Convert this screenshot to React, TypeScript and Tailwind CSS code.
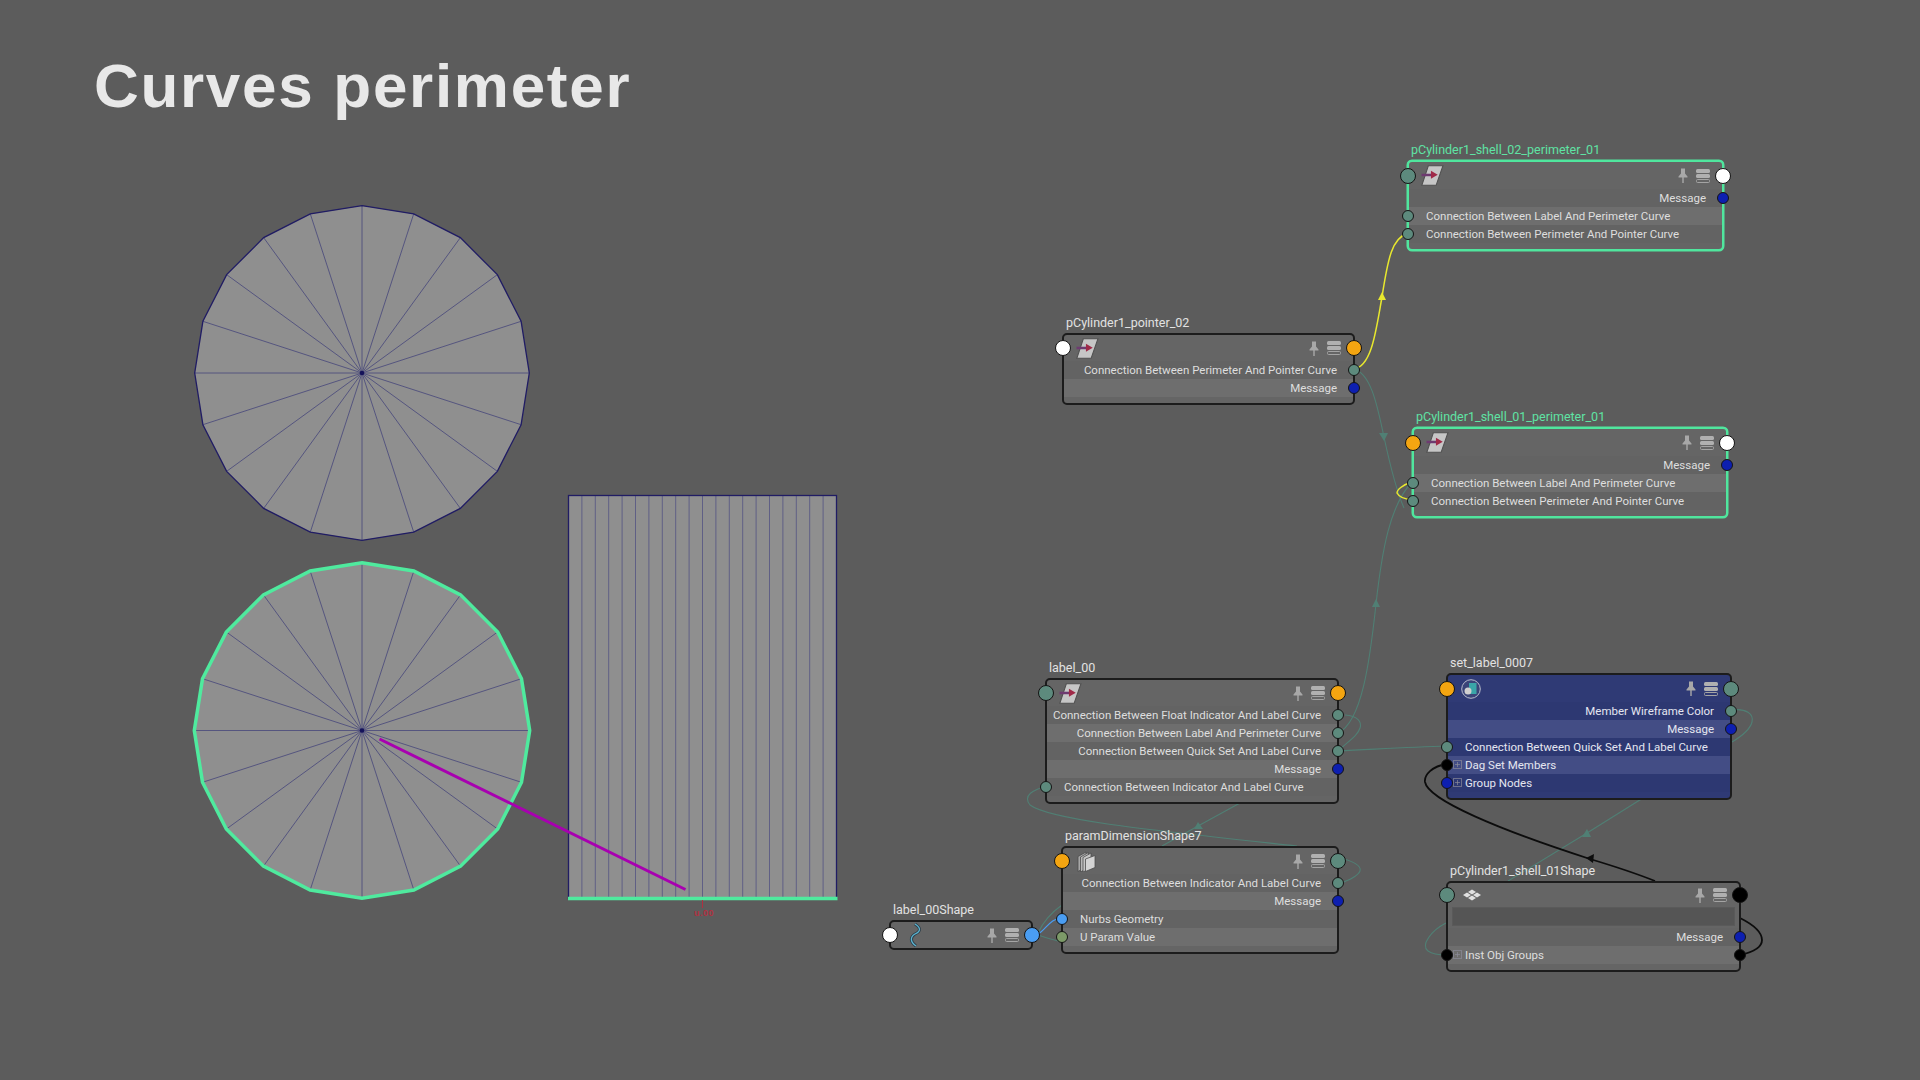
import React from "react";

const UI_FONT = "font-['Roboto',sans-serif]";

type PortColor = "white" | "orange" | "teal" | "blue" | "black" | "navy" | "olive";
type Align = "left" | "right";

type Row = {
  text: string;
  align: Align;
  left?: PortColor;
  right?: PortColor;
  plus?: boolean;
};

type IconKind = "curve" | "sheets" | "set" | "diamond" | "wave";

type NodeData = {
  name: string;
  pos: string;
  icon: IconKind;
  inPort: PortColor;
  outPort: PortColor;
  rows: Row[];
  selected?: boolean;
  blue?: boolean;
  field?: boolean;
  tall?: boolean;
};

const portColors: Record<PortColor, string> = {
  white: "bg-white",
  orange: "bg-[#f4a511]",
  teal: "bg-[#5d8a7d]",
  blue: "bg-[#4a9df2]",
  black: "bg-black",
  navy: "bg-[#0d1fb0]",
  olive: "bg-[#7c9a68]",
};

const iconOffset: Record<IconKind, string> = {
  curve: "ml-[12px]",
  sheets: "ml-[14px]",
  set: "ml-[13px]",
  diamond: "ml-[14px]",
  wave: "ml-[17px]",
};

const nodes: NodeData[] = [
  {
    name: "pCylinder1_shell_02_perimeter_01",
    pos: "left-[1407px] top-[160px] w-[317px]",
    icon: "curve",
    inPort: "teal",
    outPort: "white",
    selected: true,
    tall: true,
    rows: [
      { text: "Message", align: "right", right: "navy" },
      { text: "Connection Between Label And Perimeter Curve", align: "left", left: "teal" },
      { text: "Connection Between Perimeter And Pointer Curve", align: "left", left: "teal" },
    ],
  },
  {
    name: "pCylinder1_shell_01_perimeter_01",
    pos: "left-[1412px] top-[427px] w-[316px]",
    icon: "curve",
    inPort: "orange",
    outPort: "white",
    selected: true,
    tall: true,
    rows: [
      { text: "Message", align: "right", right: "navy" },
      { text: "Connection Between Label And Perimeter Curve", align: "left", left: "teal" },
      { text: "Connection Between Perimeter And Pointer Curve", align: "left", left: "teal" },
    ],
  },
  {
    name: "pCylinder1_pointer_02",
    pos: "left-[1062px] top-[333px] w-[293px]",
    icon: "curve",
    inPort: "white",
    outPort: "orange",
    rows: [
      { text: "Connection Between Perimeter And Pointer Curve", align: "right", right: "teal" },
      { text: "Message", align: "right", right: "navy" },
    ],
  },
  {
    name: "label_00",
    pos: "left-[1045px] top-[678px] w-[294px]",
    icon: "curve",
    inPort: "teal",
    outPort: "orange",
    rows: [
      { text: "Connection Between Float Indicator And Label Curve", align: "right", right: "teal" },
      { text: "Connection Between Label And Perimeter Curve", align: "right", right: "teal" },
      { text: "Connection Between Quick Set And Label Curve", align: "right", right: "teal" },
      { text: "Message", align: "right", right: "navy" },
      { text: "Connection Between Indicator And Label Curve", align: "left", left: "teal" },
    ],
  },
  {
    name: "paramDimensionShape7",
    pos: "left-[1061px] top-[846px] w-[278px]",
    icon: "sheets",
    inPort: "orange",
    outPort: "teal",
    rows: [
      { text: "Connection Between Indicator And Label Curve", align: "right", right: "teal" },
      { text: "Message", align: "right", right: "navy" },
      { text: "Nurbs Geometry", align: "left", left: "blue" },
      { text: "U Param Value", align: "left", left: "olive" },
    ],
  },
  {
    name: "set_label_0007",
    pos: "left-[1446px] top-[673px] w-[286px]",
    icon: "set",
    inPort: "orange",
    outPort: "teal",
    blue: true,
    tall: true,
    rows: [
      { text: "Member Wireframe Color", align: "right", right: "teal" },
      { text: "Message", align: "right", right: "navy" },
      { text: "Connection Between Quick Set And Label Curve", align: "left", left: "teal" },
      { text: "Dag Set Members", align: "left", left: "black", plus: true },
      { text: "Group Nodes", align: "left", left: "navy", plus: true },
    ],
  },
  {
    name: "pCylinder1_shell_01Shape",
    pos: "left-[1446px] top-[881px] w-[295px]",
    icon: "diamond",
    inPort: "teal",
    outPort: "black",
    field: true,
    rows: [
      { text: "Message", align: "right", right: "navy" },
      { text: "Inst Obj Groups", align: "left", left: "black", right: "black", plus: true },
    ],
  },
  {
    name: "label_00Shape",
    pos: "left-[889px] top-[920px] w-[144px]",
    icon: "wave",
    inPort: "white",
    outPort: "blue",
    rows: [],
  },
];

const NodeIcon = ({ kind }: { kind: IconKind }) => {
  if (kind === "curve") {
    return (
      <svg width="23" height="21" viewBox="0 0 22 20" className="block">
        <path d="M7 0.700h14l-6.500 18.600H0.800z" fill="#c6c6c6" stroke="#505050" strokeWidth="1" />
        <path d="M0.500 9.500h11" stroke="#6e3a70" strokeWidth="2.400" />
        <path d="M9.500 5.500l6.500 3.800-6.500 3.800z" fill="#a02a48" />
      </svg>
    );
  }
  if (kind === "sheets") {
    return (
      <svg width="19" height="21" viewBox="0 0 19 21" className="block">
        <path d="M1 5.500l8-4.500v15l-8 4.500z" fill="#a8a8a8" stroke="#4c4c4c" strokeWidth="0.800" />
        <path d="M3.500 6l8-4.500v15l-8 4.500z" fill="#b8b8b8" stroke="#4c4c4c" strokeWidth="0.800" />
        <path d="M6 6.500l8-4.500v15l-8 4z" fill="#c6c6c6" stroke="#4c4c4c" strokeWidth="0.800" />
        <path d="M8.500 8l9.500-3.500v12l-9.500 4z" fill="#d4d4d4" stroke="#4c4c4c" strokeWidth="0.800" />
      </svg>
    );
  }
  if (kind === "set") {
    return (
      <svg width="20" height="20" viewBox="0 0 20 20" className="block">
        <circle cx="10" cy="10" r="9.300" fill="#3a4478" stroke="#b8bccc" strokeWidth="1" />
        <rect x="8" y="4" width="7.500" height="11" fill="#3aa5a8" />
        <circle cx="7" cy="12" r="3.500" fill="#d0d0d0" />
      </svg>
    );
  }
  if (kind === "diamond") {
    return (
      <svg width="20" height="12" viewBox="0 0 20 12" className="block">
        <path d="M10 0.500l4 2.500-4 2.500-4-2.500z" fill="#e0e0e0" />
        <path d="M5 3.500l4 2.500-4 2.500-4-2.500z" fill="#e0e0e0" />
        <path d="M15 3.500l4 2.500-4 2.500-4-2.500z" fill="#e0e0e0" />
        <path d="M10 6.500l4 2.500-4 2.500-4-2.500z" fill="#e0e0e0" />
      </svg>
    );
  }
  return (
    <svg width="16" height="24" viewBox="0 0 16 24" className="block">
      <path d="M7 1C13 5 13 8 7 11C2 14 2 19 8 23" fill="none" stroke="#2c3e4a" strokeWidth="3" />
      <path d="M7 1C13 5 13 8 7 11C2 14 2 19 8 23" fill="none" stroke="#5cb4d0" strokeWidth="1.300" />
    </svg>
  );
};

const HeaderTools = () => (
  <div className="ml-auto mr-[12px] flex items-center gap-[8px]">
    <svg width="10" height="15" viewBox="0 0 10 15" className="block">
      <path d="M3 0.500h4v5l2.500 3v1h-9v-1l2.500-3z" fill="#a8a8a8" />
      <rect x="4.300" y="9" width="1.400" height="6" fill="#a8a8a8" />
    </svg>
    <div className="flex w-[14px] flex-col gap-[1px]">
      <div className="h-[4px] rounded-[1.500px] bg-[#b0b0b0]" />
      <div className="h-[4px] rounded-[1.500px] bg-[#b0b0b0]" />
      <div className="h-[4px] rounded-[1.500px] border border-[#a4a4a4]" />
    </div>
  </div>
);

const Port = ({ color, big, side }: { color: PortColor; big?: boolean; side: Align }) => {
  const sideClass = big
    ? side === "left"
      ? "-left-[9px]"
      : "-right-[9px]"
    : side === "left"
      ? "-left-[7px]"
      : "-right-[7px]";
  return (
    <span
      className={`absolute top-1/2 -translate-y-1/2 rounded-full border-[1.500px] border-[#141414] ${sideClass} ${
        big ? "h-[16px] w-[16px]" : "h-[12px] w-[12px]"
      } ${portColors[color]}`}
    />
  );
};

const GraphNode = ({ node }: { node: NodeData }) => {
  const lightRow = node.blue ? "bg-[#434d85]" : "bg-[#6e6e6e]";
  const darkRow = node.blue ? "bg-[#2d3872]" : "bg-[#636363]";
  const headerHeight = node.field ? "h-[24px]" : node.tall ? "h-[27px]" : "h-[26px]";
  return (
    <div
      className={`absolute rounded-[5px] ${node.pos} ${node.rows.length > 0 ? "pb-[6px]" : ""} ${
        node.selected
          ? "border-2 border-[#50e69e] ring-[0.5px] ring-[#50e69e]"
          : "border-2 border-[#1c1c1c]"
      } ${node.blue ? "bg-[#2f3a75]" : "bg-[#656565]"}`}
    >
      <div
        className={`absolute bottom-full mb-[3px] left-[2px] whitespace-nowrap text-[12.5px] leading-[18px] ${
          node.selected ? "text-[#5fe3a4]" : "text-[#e2e2e2]"
        }`}
      >
        {node.name}
      </div>
      <div className={`relative flex items-center ${headerHeight}`}>
        <Port color={node.inPort} big side="left" />
        <div className={iconOffset[node.icon]}>
          <NodeIcon kind={node.icon} />
        </div>
        <HeaderTools />
        <Port color={node.outPort} big side="right" />
      </div>
      {node.field && (
        <div className="mx-[4px] mb-[2px] h-[19px] border border-[#5a5a5a] bg-[#555555]" />
      )}
      {node.rows.map((row, i) => (
        <div
          key={row.text + i}
          className={`relative flex h-[18px] items-center whitespace-nowrap pl-[17px] pr-[16px] text-[11.5px] leading-[18px] ${
            row.align === "right" ? "justify-end" : "justify-start"
          } ${node.blue ? "text-[#e4e6f0]" : "text-[#dedede]"} ${i % 2 === 1 ? lightRow : darkRow}`}
        >
          {row.left && <Port color={row.left} side="left" />}
          {row.plus && (
            <span className="absolute left-[5px] top-[4px] flex h-[9px] w-[9px] items-center justify-center border border-[#8a8a98]/70">
              <span className="absolute h-[1px] w-[5px] bg-[#8a8a98]/70" />
              <span className="absolute h-[5px] w-[1px] bg-[#8a8a98]/70" />
            </span>
          )}
          {row.text}
          {row.right && <Port color={row.right} side="right" />}
        </div>
      ))}
    </div>
  );
};

const polygonPoints = (cx: number, cy: number, r: number) =>
  Array.from({ length: 20 }, (_, i) => {
    const a = (i * Math.PI) / 10;
    return [cx + r * Math.sin(a), cy - r * Math.cos(a)];
  });

const Disc = ({ cx, cy, r, selected }: { cx: number; cy: number; r: number; selected?: boolean }) => {
  const pts = polygonPoints(cx, cy, r);
  return (
    <g>
      <polygon points={pts.map((p) => p.join(",")).join(" ")} fill="#8f8f8f" />
      {pts.map((p, i) => (
        <line key={i} x1={cx} y1={cy} x2={p[0]} y2={p[1]} stroke="#55557f" strokeWidth="1" />
      ))}
      <polygon
        points={pts.map((p) => p.join(",")).join(" ")}
        fill="none"
        stroke={selected ? "#4fea9e" : "#201c64"}
        strokeWidth={selected ? 3.5 : 1.3}
      />
      <circle cx={cx} cy={cy} r="2.300" fill="#14125a" />
    </g>
  );
};

const Viewport = () => (
  <svg className="absolute inset-0" width="1920" height="1080">
    <Disc cx={362} cy={373} r={167.300} />
    <Disc cx={362} cy={730.500} r={167.700} selected />
    <rect x="568.500" y="495.500" width="268" height="403" fill="#8f8f8f" />
    {Array.from({ length: 19 }, (_, i) => (
      <line
        key={i}
        x1={568.500 + (i + 1) * 13.400}
        y1="496"
        x2={568.500 + (i + 1) * 13.400}
        y2="897"
        stroke="#5f5f85"
        strokeWidth="1"
      />
    ))}
    <rect x="568.500" y="495.500" width="268" height="403" fill="none" stroke="#201c64" strokeWidth="1.300" />
    <line x1="568" y1="898.500" x2="837.500" y2="898.500" stroke="#4fea9e" strokeWidth="3.500" />
    <line x1="702.500" y1="900" x2="702.500" y2="908" stroke="#b03040" strokeWidth="1" />
    <line x1="379.500" y1="739" x2="685.500" y2="889.500" stroke="#a800b0" strokeWidth="3" />
  </svg>
);

const Wires = () => (
  <svg className="absolute inset-0" width="1920" height="1080" fill="none">
    <g stroke="#507f74" strokeWidth="1.100">
      <path d="M1354 369C1372 374 1378 410 1384 437C1390 465 1396 490 1404 508" />
      <path d="M1338 733C1362 722 1370 660 1376 604C1382 550 1390 505 1412 482" />
      <path d="M1345 715C1358 716 1362 722 1360 728C1358 735 1350 740 1338 751" />
      <path d="M1338 751C1380 749 1410 747 1447 746" />
      <path d="M1046 786C1034 790 1022 795 1030 805C1050 820 1150 830 1297 846" />
      <path d="M1240 803L1198 826L1162 846" />
      <path d="M1338 858C1352 860 1362 866 1360 871C1358 876 1350 880 1338 884" />
      <path d="M1643 798L1587 833L1508 881" />
      <path d="M1732 710C1746 708 1754 714 1752 722C1750 730 1742 736 1732 742" />
      <path d="M1446 923C1432 930 1420 945 1428 951C1432 954 1440 955 1447 955" />
      <path d="M1038 933C1044 920 1052 912 1062 905" />
      <path d="M1038 935C1046 938 1054 940 1062 942" />
    </g>
    <g fill="#507f74">
      <path d="M1379 433h9l-4 8z" />
      <path d="M1376 599l4 8h-8z" />
      <path d="M1198 822l5 7h-9z" />
      <path d="M1587 829l4 8h-9z" />
    </g>
    <path d="M1038 934C1046 930 1050 918 1062 918" stroke="#4a9df2" strokeWidth="1.200" />
    <g stroke="#e8e82e" strokeWidth="1.500">
      <path d="M1354 369C1372 366 1376 330 1382 297C1388 258 1392 238 1408 233" />
      <path d="M1412 482C1402 485 1397 490 1397 493C1399 497 1404 499 1412 500" />
    </g>
    <path d="M1382 292l4 8h-8z" fill="#e8e82e" />
    <g stroke="#0c0c0c" strokeWidth="1.800">
      <path d="M1447 764C1432 766 1424 775 1425 782C1428 800 1500 830 1590 859C1620 868 1640 875 1655 881" />
      <path d="M1740 918C1754 925 1762 932 1762 940C1762 947 1754 952 1740 955" />
    </g>
    <path d="M1586 858l8-4-1 9z" fill="#0c0c0c" />
  </svg>
);

export default function App() {
  return (
    <div className={`relative h-[1080px] w-[1920px] overflow-hidden bg-[#5c5c5c] ${UI_FONT}`}>
      <Viewport />
      <Wires />
      <h1 className="relative pl-[94px] pt-[50px] font-['Liberation_Sans',sans-serif] text-[62px] font-bold leading-[72px] tracking-[1.700px] text-[#e8e8e8]">
        Curves perimeter
      </h1>
      <span className="absolute left-[694px] top-[907px] font-['Liberation_Sans',sans-serif] text-[9px] font-bold leading-[12px] tracking-[0.500px] text-[#b03040]">
        u.00
      </span>
      {nodes.map((n) => (
        <GraphNode key={n.name} node={n} />
      ))}
    </div>
  );
}
